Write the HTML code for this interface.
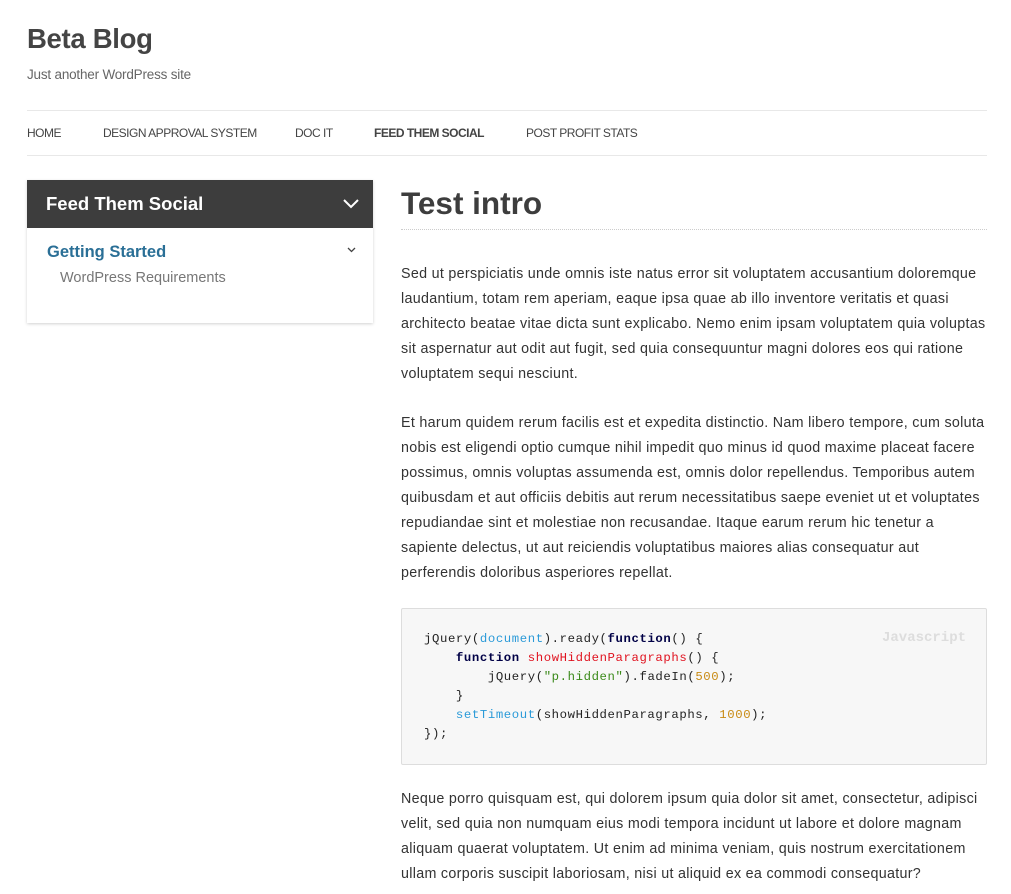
<!DOCTYPE html>
<html><head><meta charset="utf-8"><style>
body{margin:0;background:#fff;font-family:"Liberation Sans",sans-serif;color:#333;width:1011px;height:894px;overflow:hidden;position:relative}
.a{position:absolute}
h1{position:absolute;left:27px;top:23px;margin:0;font-size:27.5px;font-weight:bold;color:#444;letter-spacing:-0.3px}
.tag{left:27px;top:67px;font-size:13.5px;color:#666;letter-spacing:-0.2px}
.hr{left:27px;width:960px;height:1px;background:#e8e8e8}
.nav{top:126px;font-size:12px;color:#444;letter-spacing:-0.5px}
.side{left:27px;top:180px;width:346px;height:143px;background:#fff;box-shadow:0 1px 3px rgba(0,0,0,.18)}
.sh{height:48px;background:#3d3d3d;color:#fff;font-weight:bold;font-size:18.5px;line-height:48px;padding-left:19px}
.t{left:401px;top:185px;font-size:31.5px;font-weight:bold;color:#3d3d3d;margin:0}
.p{left:401px;font-size:14.3px;line-height:25px;color:#333;white-space:nowrap;letter-spacing:0.3px}
.code{left:401px;top:608px;width:584px;height:155px;background:#f7f7f7;border:1px solid #ddd;border-radius:2px}
pre{margin:0;position:absolute;left:22px;top:21px;font-family:"Liberation Mono",monospace;font-size:12.3px;line-height:19px;color:#222;letter-spacing:0.6px}
.k{color:#000046;font-weight:bold}.b{color:#2a9ad8}.r{color:#e0121f}.g{color:#3b8a1a}.o{color:#c88a12}
</style></head><body>
<h1>Beta Blog</h1>
<div class="a tag">Just another WordPress site</div>
<div class="a hr" style="top:110px"></div>
<div class="a nav" style="left:27px">HOME</div>
<div class="a nav" style="left:103px">DESIGN APPROVAL SYSTEM</div>
<div class="a nav" style="left:295px">DOC IT</div>
<div class="a nav" style="left:374px;font-weight:bold">FEED THEM SOCIAL</div>
<div class="a nav" style="left:526px">POST PROFIT STATS</div>
<div class="a hr" style="top:155px"></div>
<div class="a side">
<div class="sh">Feed Them Social</div>
<svg class="a" style="left:316px;top:19px" width="16" height="10"><path d="M1 1l7 7 7-7" stroke="#fff" stroke-width="2" fill="none"/></svg>
<div class="a" style="left:20px;top:63px;font-size:16.5px;font-weight:bold;color:#2a6f96">Getting Started</div>
<svg class="a" style="left:320px;top:67px" width="9" height="6"><path d="M1 1l3.5 3.5L8 1" stroke="#444" stroke-width="1.3" fill="none"/></svg>
<div class="a" style="left:33px;top:90px;font-size:14.5px;color:#777">WordPress Requirements</div>
</div>
<h2 class="a t">Test intro</h2>
<div class="a" style="left:401px;top:229px;width:586px;border-top:1px dotted #ccc"></div>
<div class="a p" style="top:262px">Sed ut perspiciatis unde omnis iste natus error sit voluptatem accusantium doloremque<br>laudantium, totam rem aperiam, eaque ipsa quae ab illo inventore veritatis et quasi<br>architecto beatae vitae dicta sunt explicabo. Nemo enim ipsam voluptatem quia voluptas<br>sit aspernatur aut odit aut fugit, sed quia consequuntur magni dolores eos qui ratione<br>voluptatem sequi nesciunt.</div>
<div class="a p" style="top:411px">Et harum quidem rerum facilis est et expedita distinctio. Nam libero tempore, cum soluta<br>nobis est eligendi optio cumque nihil impedit quo minus id quod maxime placeat facere<br>possimus, omnis voluptas assumenda est, omnis dolor repellendus. Temporibus autem<br>quibusdam et aut officiis debitis aut rerum necessitatibus saepe eveniet ut et voluptates<br>repudiandae sint et molestiae non recusandae. Itaque earum rerum hic tenetur a<br>sapiente delectus, ut aut reiciendis voluptatibus maiores alias consequatur aut<br>perferendis doloribus asperiores repellat.</div>
<div class="a code">
<div class="a" style="right:20px;top:21px;font-family:'Liberation Mono',monospace;font-weight:bold;font-size:14px;color:#ddd">Javascript</div>
<pre>jQuery(<span class="b">document</span>).ready(<span class="k">function</span>() {
    <span class="k">function</span> <span class="r">showHiddenParagraphs</span>() {
        jQuery(<span class="g">"p.hidden"</span>).fadeIn(<span class="o">500</span>);
    }
    <span class="b">setTimeout</span>(showHiddenParagraphs, <span class="o">1000</span>);
});</pre>
</div>
<div class="a p" style="top:787px">Neque porro quisquam est, qui dolorem ipsum quia dolor sit amet, consectetur, adipisci<br>velit, sed quia non numquam eius modi tempora incidunt ut labore et dolore magnam<br>aliquam quaerat voluptatem. Ut enim ad minima veniam, quis nostrum exercitationem<br>ullam corporis suscipit laboriosam, nisi ut aliquid ex ea commodi consequatur?</div>
</body></html>
